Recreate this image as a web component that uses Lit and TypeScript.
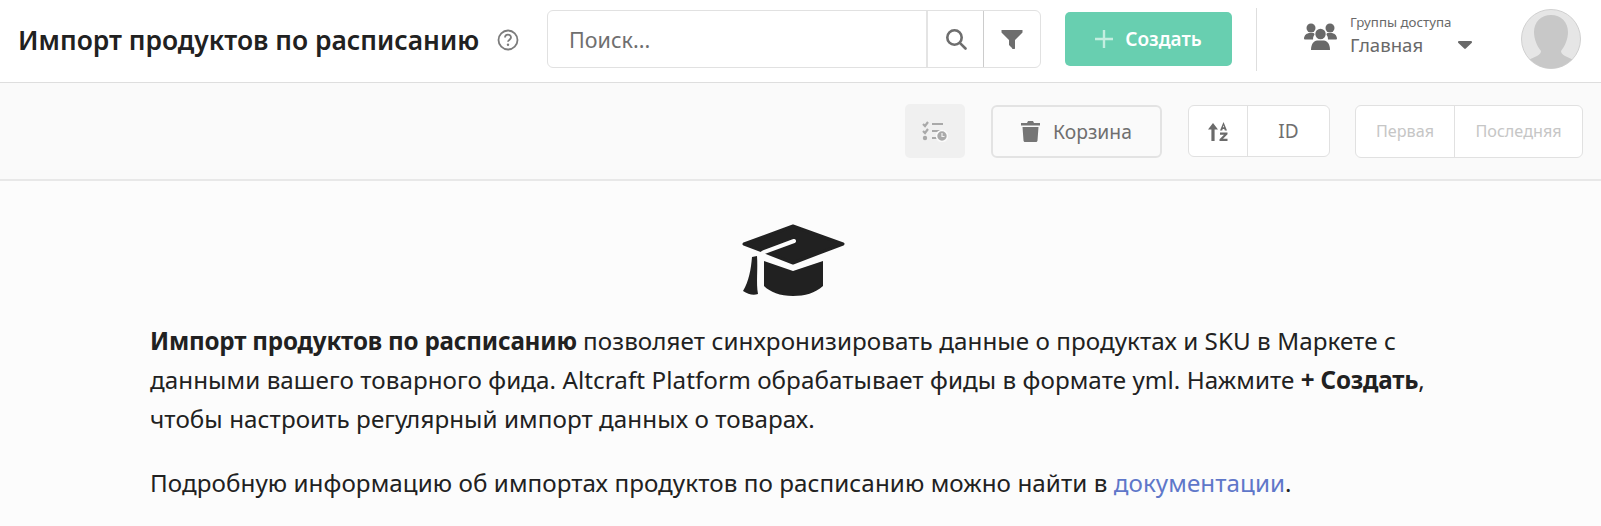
import { LitElement, css, html } from 'lit';
import { customElement } from 'lit/decorators.js';

@customElement('app-root')
export class AppRoot extends LitElement {
  static styles = css`
    :host {
      display: block;
      height: 526px;
      overflow: hidden;
      background: #fcfcfc;
      font-family: 'Noto Sans', sans-serif;
      color: #212121;
    }

    svg {
      display: block;
      flex: none;
    }

    .header {
      height: 83px;
      box-sizing: border-box;
      border-bottom: 1px solid #dedede;
      background: #fff;
      display: flex;
      align-items: center;
      padding: 0 0 4px 18px;
    }

    .title {
      margin: 2px 0 0;
      width: 462px;
      font-size: 26.4px;
      font-weight: 600;
      white-space: nowrap;
    }

    .help {
      margin: 1px 28px 0 17px;
      color: #7c7c7c;
    }

    .search {
      width: 494px;
      height: 58px;
      box-sizing: border-box;
      border: 1px solid #e1e1e1;
      border-radius: 6px;
      display: flex;
      background: #fff;
    }

    .search-input {
      flex: 1;
      display: flex;
      align-items: center;
      padding-left: 21px;
      font-size: 21.5px;
      color: #6f6f6f;
    }

    .search-btn {
      display: grid;
      place-items: center;
      color: #6e6e6e;
      box-sizing: border-box;
    }

    .search-btn.find {
      width: 57px;
      border-left: 2px solid #e4e4e4;
    }

    .search-btn.filter {
      width: 57px;
      border-left: 1px solid #cccccc;
    }

    .create {
      margin-left: 24px;
      width: 167px;
      height: 54px;
      border-radius: 5px;
      background: #68cfb0;
      color: #fff;
      font-size: 19px;
      font-weight: 600;
      display: flex;
      align-items: center;
      justify-content: center;
      gap: 12px;
    }

    .divider {
      margin: 0 47px 0 24px;
      width: 1px;
      height: 63px;
      background: #dedede;
    }

    .groups {
      color: #696969;
      margin: 0 13px 5px 0;
    }

    .group-text {
      width: 108px;
      color: #696969;
      margin-bottom: 8px;
    }

    .group-label {
      font-size: 13.3px;
      line-height: 19px;
    }

    .group-name {
      font-size: 18.6px;
      line-height: 25px;
    }

    .caret {
      color: #696969;
      margin: 11px 49px 0 0;
    }

    .avatar {
      width: 60px;
      height: 60px;
    }

    .toolbar {
      height: 98px;
      box-sizing: border-box;
      background: #fafafa;
      border-bottom: 2px solid #e8e8e8;
      display: flex;
      align-items: center;
      justify-content: flex-end;
      padding-right: 18px;
    }

    .tasks {
      width: 60px;
      height: 54px;
      border-radius: 5px;
      background: #f0f0f0;
      color: #a9a9a9;
      display: grid;
      place-items: center;
      margin-right: 26px;
    }

    .trash {
      width: 171px;
      height: 53px;
      box-sizing: border-box;
      border: 2px solid #e3e3e3;
      border-radius: 6px;
      display: flex;
      align-items: center;
      justify-content: center;
      gap: 13px;
      font-size: 19.3px;
      color: #6f6f6f;
      margin-right: 26px;
    }

    .trash svg {
      color: #757575;
    }

    .seg {
      height: 52px;
      box-sizing: border-box;
      border: 1px solid #e1e1e1;
      border-radius: 6px;
      background: #fff;
      display: flex;
      font-size: 19px;
      color: #6f6f6f;
    }

    .seg > div {
      display: grid;
      place-items: center;
    }

    .seg > div + div {
      border-left: 1px solid #e1e1e1;
    }

    .sort {
      margin-right: 25px;
    }

    .sort-icon {
      width: 58px;
    }

    .sort-field {
      width: 81px;
    }

    .pager {
      height: 53px;
      color: #c6c6c6;
      font-size: 16.2px;
    }

    .pager .first {
      width: 98px;
    }

    .pager .last {
      width: 127px;
    }

    .content {
      padding: 43px 0 0 150px;
      font-size: 24.2px;
      line-height: 39px;
      color: #212121;
    }

    .cap {
      width: 1286px;
      display: flex;
      justify-content: center;
      margin-bottom: 24px;
    }

    .content p {
      margin: 0 0 25px;
      white-space: nowrap;
      letter-spacing: 0.07px;
    }

    .content b {
      letter-spacing: -0.2px;
    }

    a {
      color: #5f77c9;
      text-decoration: none;
    }
  `;

  render() {
    return html`
      <div class="header">
        <h1 class="title">Импорт продуктов по расписанию</h1>
        <svg class="help" width="22" height="22" viewBox="0 0 22 22" fill="none">
          <circle cx="11" cy="11" r="9.5" stroke="currentColor" stroke-width="1.8" />
          <path d="M8 8.6a3 3 0 0 1 6 0c0 2-3 2.2-3 4.2" stroke="currentColor" stroke-width="1.8" />
          <circle cx="11" cy="15.8" r="1.2" fill="currentColor" />
        </svg>
        <div class="search">
          <div class="search-input">Поиск...</div>
          <div class="search-btn find">
            <svg width="22" height="22" viewBox="0 0 22 22" fill="none" stroke="currentColor" stroke-width="2.6">
              <circle cx="9.5" cy="9.5" r="7.2" />
              <path d="M14.8 14.8L20.5 20.5" stroke-linecap="round" />
            </svg>
          </div>
          <div class="search-btn filter">
            <svg width="22" height="19" viewBox="0 0 22 19" fill="currentColor">
              <path d="M0.5 0h21v2.5L14 10v7.500a1.500 1.500 0 0 1-3 .5L8 15v-5L0.500 2.500z" />
            </svg>
          </div>
        </div>
        <div class="create">
          <svg width="18" height="18" viewBox="0 0 18 18" stroke="#c4eee0" stroke-width="2.4">
            <path d="M9 0v18M0 9h18" />
          </svg>
          <span>Создать</span>
        </div>
        <div class="divider"></div>
        <svg class="groups" width="33" height="27" viewBox="0 0 33 27" fill="currentColor">
          <circle cx="7" cy="5" r="4.5" />
          <circle cx="26" cy="5" r="4.5" />
          <path d="M0 16C0 12 3 10 6 10h3c.8 0 1.500.5 1.500 1.500a8 8 0 0 0-1.500 5H1c-.5 0-1-.2-1-.5z" />
          <path d="M33 16C33 12 30 10 27 10h-3c-.8 0-1.500.5-1.500 1.500a8 8 0 0 1 1.500 5h8c.5 0 1-.2 1-.5z" />
          <circle cx="16.500" cy="11" r="5.200" />
          <path d="M7 27c0-6 3-9.500 6-9.500h7c3 0 6 3.500 6 9.500z" />
        </svg>
        <div class="group-text">
          <div class="group-label">Группы доступа</div>
          <div class="group-name">Главная</div>
        </div>
        <svg class="caret" width="14" height="8" viewBox="0 0 14 8" fill="currentColor">
          <path d="M0 1.200C0 .5.500 0 1.200 0h11.600c.7 0 1.200.5 1.200 1.200 0 .3-.1.6-.4.8L7.800 7.600a1.200 1.200 0 0 1-1.600 0L.4 2C.1 1.800 0 1.500 0 1.200z" />
        </svg>
        <svg class="avatar" viewBox="0 0 60 60">
          <defs>
            <clipPath id="face"><circle cx="30" cy="30" r="29.500" /></clipPath>
          </defs>
          <circle cx="30" cy="30" r="29.500" fill="#e6e6e6" stroke="#d0d0d0" />
          <path clip-path="url(#face)" fill="#c8c8c8" d="M30 6c10 0 17 7 17 17 0 7-3 14-7 19 0 2 1 3 4 5l13 6v8H3v-8l13-6c3-2 4-3 4-5-4-5-7-12-7-19 0-10 7-17 17-17z" />
        </svg>
      </div>

      <div class="toolbar">
        <div class="tasks">
          <svg width="26" height="21" viewBox="0 0 26 21" fill="none" stroke="currentColor" stroke-width="2.200">
            <path d="M1 3l2 2 3-4M1 10l2 2 3-4" />
            <path d="M10 3h11M10 10h12M10 17h7" />
            <circle cx="3" cy="17" r="2.200" fill="currentColor" stroke="none" />
            <circle cx="20" cy="15" r="5.500" fill="currentColor" stroke="#fafafa" stroke-width="1.600" />
            <path d="M20 12v3.500h2.500" stroke="#f0f0f0" stroke-width="1.200" />
          </svg>
        </div>
        <div class="trash">
          <svg width="19" height="21" viewBox="0 0 19 21" fill="currentColor">
            <path d="M0 2h6L7 0h5l1 2h6v2.500H0zM1.500 6h16l-1 13.500c0 .8-.7 1.500-1.500 1.500H4c-.8 0-1.500-.7-1.500-1.500z" />
          </svg>
          <span>Корзина</span>
        </div>
        <div class="seg sort">
          <div class="sort-icon">
            <svg width="20" height="19" viewBox="0 0 20 19" fill="#6b6b6b">
              <path d="M5 1l5 6.500H6.600V19H3.400V7.500H0z" />
              <path fill-rule="evenodd" d="M15.500 0l3.500 8.500h-2.200l-.5-1.500h-1.600l-.5 1.500H12zM14.900 5.200h1.200l-.6-1.900zM12 10.500h7.500v1.800L15 16.800h4.500V19H11.500v-1.800L16 12.700h-4z" />
            </svg>
          </div>
          <div class="sort-field">ID</div>
        </div>
        <div class="seg pager">
          <div class="first">Первая</div>
          <div class="last">Последняя</div>
        </div>
      </div>

      <div class="content">
        <div class="cap">
          <svg width="103" height="73" viewBox="22 13 103 73">
            <path fill="#212121" stroke="#212121" stroke-width="3" stroke-linejoin="round" d="M24 33L73 15L123 33L73 52z" />
            <path fill="#212121" d="M44 50L73 60L103 50V75C95 82 85 85 73 85C60 85 50 81 44 75z" />
            <path fill="none" stroke="#fcfcfc" stroke-width="4" stroke-linecap="round" d="M74 30L44 41C40 43 38 45 37 49" />
            <path fill="#212121" d="M32 46L37 45C38 58 36 72 38 83C33 85 28 83 23 80C29 70 31 58 32 46z" />
          </svg>
        </div>
        <p>
          <b>Импорт продуктов по расписанию</b> позволяет синхронизировать данные о продуктах и SKU в Маркете с<br />
          данными вашего товарного фида. Altcraft Platform обрабатывает фиды в формате yml. Нажмите <b>+ Создать</b>,<br />
          чтобы настроить регулярный импорт данных о товарах.
        </p>
        <p>Подробную информацию об импортах продуктов по расписанию можно найти в <a>документации</a>.</p>
      </div>
    `;
  }
}
